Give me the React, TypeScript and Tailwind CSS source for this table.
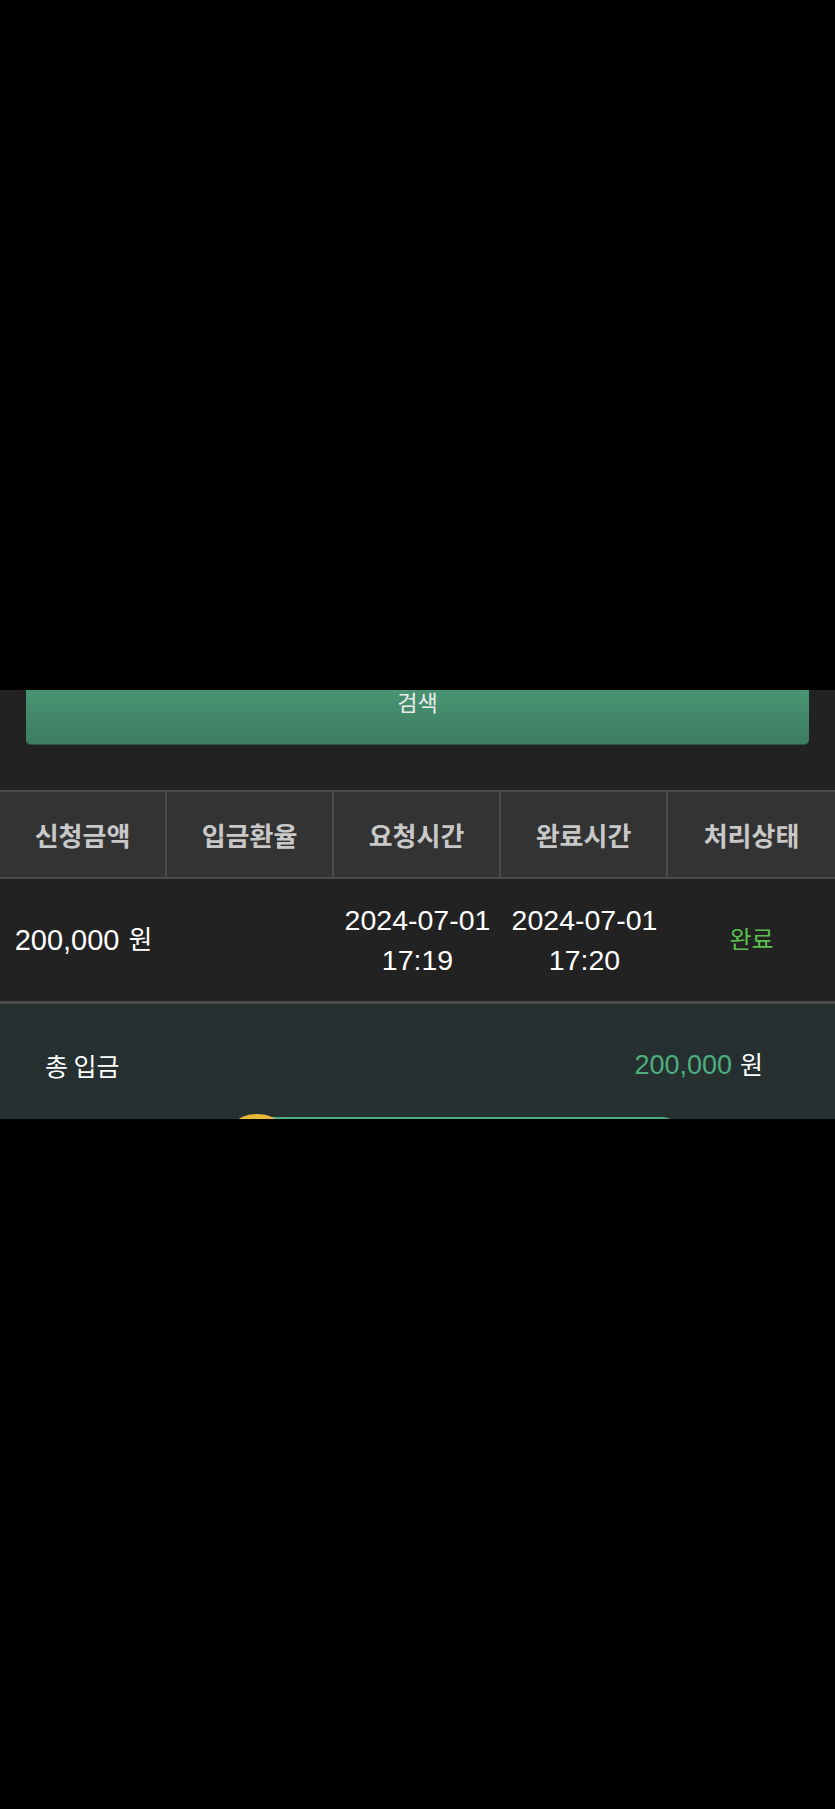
import React from "react";

const font = "font-['Liberation_Sans','Noto_Sans_CJK_KR',sans-serif]";

export default function App() {
  const headers = ["신청금액", "입금환율", "요청시간", "완료시간", "처리상태"];
  return (
    <div className={`w-[835px] h-[1809px] bg-black flex flex-col ${font}`}>
      <div className="h-[690px] shrink-0" />
      <div className="h-[429px] shrink-0 overflow-hidden bg-[#222222] flex flex-col">
        <div className="px-[26px] shrink-0">
          <div className="-mt-[32px] h-[87px] rounded-b-[5px] bg-gradient-to-b from-[#4fa37f] to-[#3d7c60] border-b border-[#2c5745] flex items-center justify-center">
            <span className="text-[22px] text-[#ececec] font-['Noto_Sans_CJK_KR',sans-serif]">검색</span>
          </div>
        </div>
        <div className="h-[45px] shrink-0" />
        <div className="grid grid-cols-5 border-t-2 border-b-2 border-[#4a4a4a] shrink-0">
          {headers.map((h, i) => (
            <div
              key={h}
              className={`h-[85px] bg-[#333333] flex items-center justify-center ${i < 4 ? "border-r-2 border-[#4a4a4a]" : ""}`}
            >
              <span className="text-[26px] font-bold text-[#c8c8c8] font-['Noto_Sans_CJK_KR',sans-serif] leading-none">{h}</span>
            </div>
          ))}
        </div>
        <div className="grid grid-cols-5 h-[125px] border-b-[3px] border-[#4d4d4d] shrink-0 text-white">
          <div className="flex items-center justify-center">
            <span className="text-[29px] leading-none">200,000</span>
            <span className="text-[26px] leading-none ml-[9px]">원</span>
          </div>
          <div />
          <div className="flex flex-col items-center justify-center text-[28.5px] leading-[40px]">
            <span>2024-07-01</span>
            <span>17:19</span>
          </div>
          <div className="flex flex-col items-center justify-center text-[28.5px] leading-[40px]">
            <span>2024-07-01</span>
            <span>17:20</span>
          </div>
          <div className="flex items-center justify-center">
            <span className="text-[24px] text-[#5cbf50] leading-none">완료</span>
          </div>
        </div>
        <div className="flex-1 bg-[#263030] relative">
          <div className="flex items-center justify-between pl-[45px] pr-[72px] h-[122px]">
            <span className="text-[25px] text-white leading-none font-['Noto_Sans_CJK_KR',sans-serif]">총 입금</span>
            <div className="flex items-center">
              <span className="text-[27px] text-[#4caf80] leading-none">200,000</span>
              <span className="text-[25px] text-white leading-none ml-[8px]">원</span>
            </div>
          </div>
          <div className="absolute left-[235px] top-[113px] w-[447px] h-[40px] rounded-[20px] bg-[#4caf80]" />
          <div className="absolute left-[236px] top-[110px] w-[42px] h-[20px] rounded-[50%] bg-[#e8b83a]" />
        </div>
      </div>
      <div className="flex-1 bg-black" />
    </div>
  );
}
